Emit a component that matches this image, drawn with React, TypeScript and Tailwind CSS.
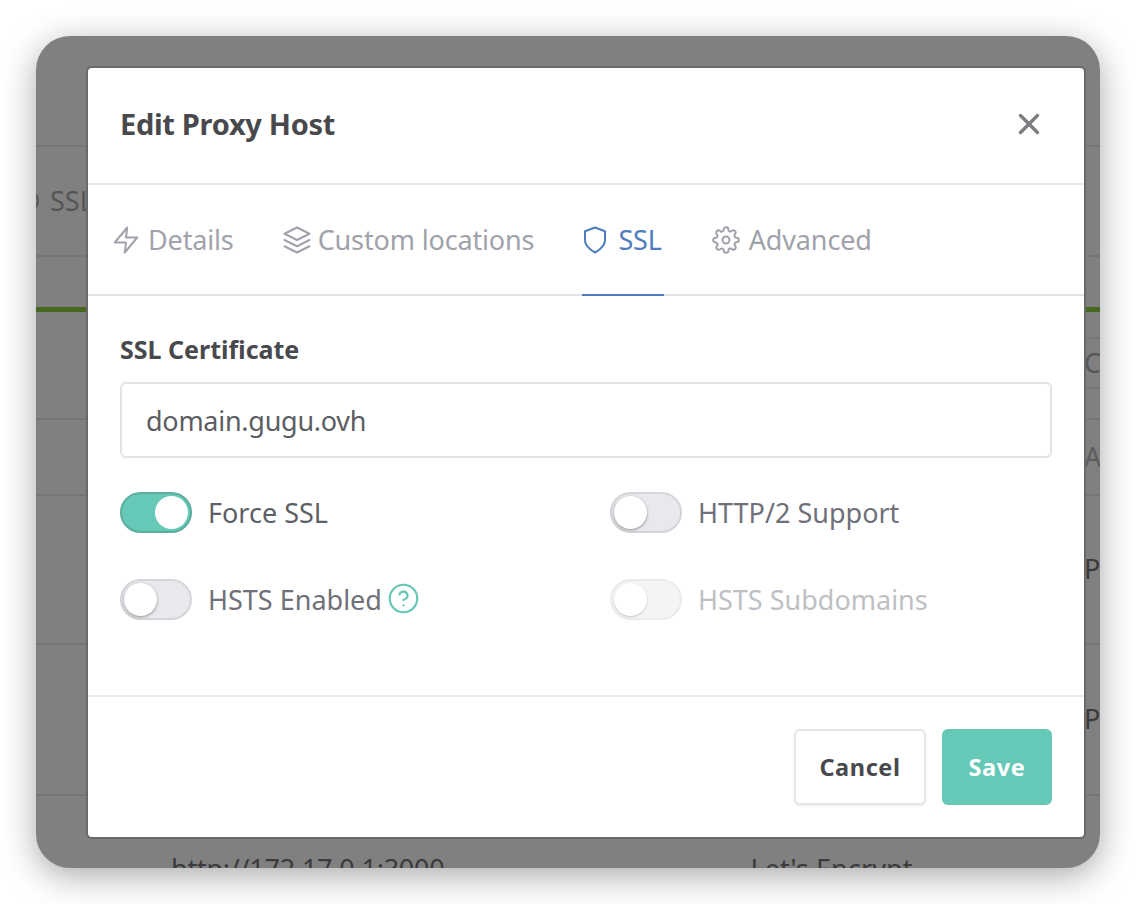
import React from "react";
import { TbX } from "react-icons/tb";
import { FiZap, FiLayers, FiShield, FiSettings, FiHelpCircle, FiCircle } from "react-icons/fi";

const font = { fontFamily: '"Noto Sans", sans-serif' };

function Toggle({ on, disabled }: { on?: boolean; disabled?: boolean }) {
  if (on) {
    return (
      <div className="flex h-[41px] w-[72px] shrink-0 items-center justify-end rounded-full border-2 border-[#5cae9f] bg-[#66c8b7] px-[2px]">
        <div className="h-[33px] w-[33px] rounded-full bg-white" />
      </div>
    );
  }
  return (
    <div
      className={
        disabled
          ? "flex h-[41px] w-[72px] shrink-0 items-center justify-start rounded-full border-2 border-[#ebebef] bg-[#f4f4f6] px-[2px]"
          : "flex h-[41px] w-[72px] shrink-0 items-center justify-start rounded-full border-2 border-[#d4d4da] bg-[#e9e9ed] px-[2px]"
      }
    >
      <div
        className={
          disabled
            ? "h-[33px] w-[33px] rounded-full bg-white shadow-[0_1px_2px_rgba(0,0,0,0.2)]"
            : "h-[33px] w-[33px] rounded-full bg-white shadow-[0_1px_3px_rgba(0,0,0,0.4)]"
        }
      />
    </div>
  );
}

function Tab({ icon, label, active, gap }: { icon: React.ReactNode; label: string; active?: boolean; gap: string }) {
  return (
    <div
      className={
        active
          ? `-mb-[2px] flex h-[111px] items-center border-b-2 border-[#4f7cbd] pr-[2px] text-[#4f7cbd] ${gap}`
          : `-mb-[2px] flex h-[111px] items-center pb-[2px] text-[#a0a2ab] ${gap}`
      }
    >
      {icon}
      <span className="text-[27px] leading-none tracking-[-0.15px]">{label}</span>
    </div>
  );
}

function Row({ h, border = true, text, line }: { h: string; border?: boolean; text?: React.ReactNode; line?: string }) {
  return (
    <div className={`${h} flex items-center overflow-hidden whitespace-nowrap ${border ? (line ?? "border-b-2 border-[#757577]") : ""}`}>
      {text}
    </div>
  );
}

export default function App() {
  return (
    <div className="h-[904px] w-[1136px] overflow-hidden bg-white pt-[36px] pl-[36px]" style={font}>
      <div className="relative h-[832px] w-[1064px] overflow-hidden rounded-[34px] bg-[#808080] shadow-[0_8px_34px_rgba(0,0,0,0.34)]">
        <div className="flex flex-col text-[27px] text-[#3a3a3c]">
          <Row h="h-[111px]" />
          <Row
            h="h-[110px]"
            text={
              <span className="flex items-center text-[#555557]">
                <FiCircle className="-ml-[22px] h-[26px] w-[26px]" strokeWidth={2} />
                <span className="pl-[10px]">SSL</span>
              </span>
            }
          />
          <Row h="h-[55px]" line="border-b-[5px] border-[#46671f]" />
          <Row h="h-[27px]" line="border-b-2 border-[#77777a] ml-[1048px]" />
          <Row h="h-[50px]" line="border-b-2 border-[#77777a] ml-[1048px]" text={<span className="text-[#565658]">C</span>} />
          <Row h="h-[31px]" />
          <Row h="h-[76px]" text={<span className="pl-[1048px] text-[#5c5c5e]">Ac</span>} />
          <Row h="h-[149px]" text={<span className="pl-[1048px]">P</span>} />
          <Row h="h-[151px]" text={<span className="pl-[1048px]">P</span>} />
          <div className="flex h-[72px] items-start pt-[55px] leading-[36px] whitespace-nowrap">
            <span className="pl-[135px] tracking-[-0.25px]">http://172.17.0.1:3000</span>
            <span className="pl-[306px] tracking-[0.1px]">Let's Encrypt</span>
          </div>
        </div>

        <div className="absolute top-[32px] left-[52px] flex h-[769px] w-[996px] flex-col rounded-[4px] bg-white shadow-[0_0_0_2px_#69696b]">
          <div className="flex h-[117px] shrink-0 items-center justify-between border-b-2 border-[#e8e8ec] pr-[38px] pl-[32px] pb-[4px]">
            <h2 className="text-[29px] leading-none font-bold tracking-[-0.3px] text-[#48494d]">Edit Proxy Host</h2>
            <TbX className="h-[34px] w-[34px] text-[#7c7d80]" strokeWidth={2.4} />
          </div>
          <div className="flex h-[111px] shrink-0 border-b-2 border-[#e4e4e8] pl-[23px]">
            <Tab gap="gap-[7px] mr-[48px]" icon={<FiZap className="h-[30px] w-[30px]" strokeWidth={1.6} />} label="Details" />
            <Tab gap="gap-[6px] mr-[48px]" icon={<FiLayers className="h-[30px] w-[30px]" strokeWidth={1.6} />} label="Custom locations" />
            <Tab active gap="gap-[8px] mr-[48px]" icon={<FiShield className="-ml-[2px] h-[30px] w-[30px]" strokeWidth={1.6} />} label="SSL" />
            <Tab gap="gap-[9px]" icon={<FiSettings className="h-[28px] w-[28px]" strokeWidth={1.7} />} label="Advanced" />
          </div>
          <div className="flex h-[401px] shrink-0 flex-col border-b-2 border-[#ececef] px-[32px] pt-[36px]">
            <label className="text-[25px] leading-[34px] font-bold text-[#48494d]">SSL Certificate</label>
            <div className="mt-[16px] flex h-[76px] items-center rounded-[6px] border-2 border-[#e3e3e7] pt-[3px] pl-[24px] text-[27px] tracking-[-0.27px] text-[#5c5d62]">
              domain.gugu.ovh
            </div>
            <div className="mt-[34px] grid grid-cols-[490px_1fr] gap-y-[46px] text-[27px] leading-none">
              <div className="flex items-center gap-[16px] text-[#5e5f66]"><Toggle on /><span>Force SSL</span></div>
              <div className="flex items-center gap-[16px] text-[#6f7079]"><Toggle /><span>HTTP/2 Support</span></div>
              <div className="flex items-center gap-[16px] text-[#6f7079]">
                <Toggle />
                <span>HSTS Enabled</span>
                <FiHelpCircle className="-mt-[3px] -ml-[11px] h-[33px] w-[33px] text-[#66c8b7]" strokeWidth={1.6} />
              </div>
              <div className="flex items-center gap-[16px] text-[#bebfc4]"><Toggle disabled /><span>HSTS Subdomains</span></div>
            </div>
          </div>
          <div className="flex flex-1 items-start justify-end gap-[16px] pt-[32px] pr-[32px] text-[23.5px] font-bold tracking-[0.6px]">
            <div className="flex h-[76px] w-[132px] items-center justify-center rounded-[6px] border-2 border-[#e6e6e9] bg-white pt-[2px] text-[#48494d] shadow-[0_1px_2px_rgba(0,0,0,0.08)]">Cancel</div>
            <div className="flex h-[76px] w-[110px] items-center justify-center rounded-[6px] bg-[#66c8b7] pt-[2px] text-white">Save</div>
          </div>
        </div>
      </div>
    </div>
  );
}
